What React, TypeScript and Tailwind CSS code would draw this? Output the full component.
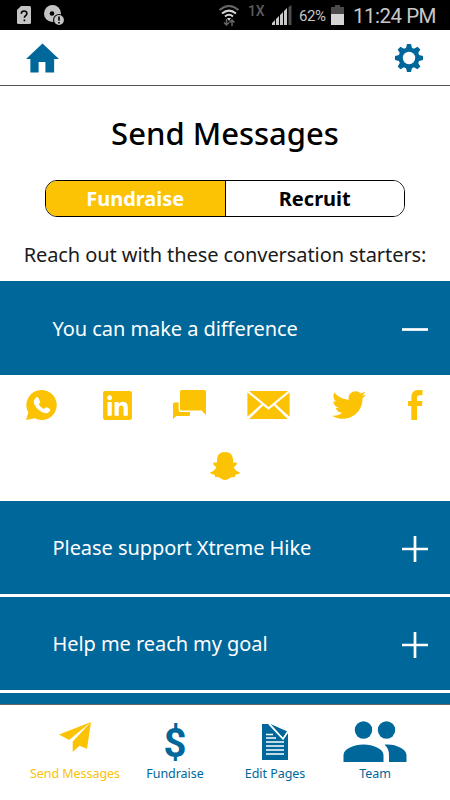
import type { ReactNode } from 'react'
import { FaLinkedin, FaTwitter } from 'react-icons/fa'

function StatusBar() {
  return (
    <div className="flex h-[30px] shrink-0 items-center bg-black pl-[17px] font-[Roboto,sans-serif]">
      <svg width="14" height="18" viewBox="0 0 14 18" className="shrink-0">
        <path d="M4 0h8.500q1.500 0 1.500 1.500v15q0 1.500-1.500 1.500h-11Q0 18 0 16.500V4z" fill="#c4c4c4" />
        <path d="M4.300 7.700c0-3.600 5.600-3.600 5.600-.2 0 2.200-2.500 2.100-2.500 4.200M7.400 13.500v1.700" fill="none" stroke="#000" strokeWidth="1.600" />
      </svg>
      <svg width="21" height="21" viewBox="0 0 21 21" className="ml-[13px] mt-px shrink-0">
        <circle cx="8.500" cy="8.500" r="8.500" fill="#c4c4c4" />
        <circle cx="8" cy="8.500" r="2.300" />
        <circle cx="15" cy="15" r="6" />
        <circle cx="15" cy="15" r="4.900" fill="#c4c4c4" />
        <path d="M15 11.500v4.300M15 16.900v1.500" stroke="#000" strokeWidth="1.600" />
      </svg>
      <svg width="22" height="23" viewBox="0 0 22 23" className="ml-[153px] shrink-0" fill="none">
        <path d="M1.500 6Q11-2 20.500 6" stroke="#686868" strokeWidth="2" />
        <path d="M4 9.500q7-5.800 14 0M7 12.500q4-3.500 8 0" stroke="#d4d4d4" strokeWidth="2" />
        <path d="M9 14h4l-2 3z" fill="#d4d4d4" />
        <path d="M8.500 15v6M6 18.500L8.500 21l2.500-2.500M14 22v-6M11.500 18.500L14 16l2.500 2.500" stroke="#666" strokeWidth="1.500" />
      </svg>
      <span className="-mt-2 ml-2 w-[17px] text-[14px] font-medium leading-none tracking-[-0.3px] text-[#5c5c5c]">1X</span>
      <svg width="20" height="20" viewBox="0 0 20 20" className="ml-[7px] shrink-0">
        <path d="M0 20v-2l3-3v5zM4 20v-6l3-3v9zM8 20V10l3-3v13zM12 20V6l3-3v17z" fill="#cacaca" />
        <path d="M16.500 20V2L19.500 0v20z" fill="#4e4e4e" />
      </svg>
      <span className="ml-[7px] mt-[2px] w-[28px] text-[15px] leading-none tracking-[-0.4px] text-[#c4c4c4]">62%</span>
      <svg width="13" height="20" viewBox="0 0 13 20" className="ml-1 shrink-0">
        <path d="M4 0h5v2h4v7H0V2h4z" fill="#4b4b4b" />
        <path d="M0 9h13v11H0z" fill="#d4d4d4" />
      </svg>
      <span className="ml-[9px] mt-[2px] whitespace-nowrap text-[20.500px] leading-none tracking-[-0.500px] text-[#c8c8c8]">11:24 PM</span>
    </div>
  )
}

function GearIcon() {
  return (
    <svg width="28" height="28" viewBox="-14 -14 28 28" fill="#00679b">
      {[0, 45, 90, 135].map((angle) => (
        <path key={angle} d="M-2-14h4l1.500 6v16L2 14h-4l-1.500-6V-8z" transform={`rotate(${angle})`} />
      ))}
      <circle r="10.500" />
      <circle r="6.200" fill="white" />
    </svg>
  )
}

function WhatsAppIcon() {
  return (
    <svg width="31" height="30" viewBox="0 0 31 30">
      <path d="M15.500 0a15 15 0 1 1-6.700 28.300L0 30l2.400-7.500A15 15 0 0 1 15.500 0" fill="#fcc204" />
      <path d="M9.100 8.400q2-2.400 3.400-.5l1.700 3.700q.3 1-1.500 2.700 1.700 3.200 5.200 4.800 1.700-2.300 2.700-1.900l3.400 1.800q.7.500-.3 2.300-2 2.500-5.100 1.600-7.700-2.300-10.500-9.200-.9-3.400 1-5.300" fill="white" />
    </svg>
  )
}

function ChatIcon() {
  return (
    <svg width="33" height="30" viewBox="0 0 33 30" fill="#fcc204">
      <path d="M8.500 0h23q1.500 0 1.500 1.500v23.500l-4.500-4.500h-20q-1.500 0-1.500-1.500V1.500Q7 0 8.500 0" />
      <path d="M0 29V14q0-1.500 1.500-1.500h4.100V20q0 2 2 2H17v2.500q0 1.500-1.500 1.500h-12z" />
    </svg>
  )
}

function MailIcon() {
  return (
    <svg width="43" height="28" viewBox="0 0 43 28" fill="#fcc204">
      <path d="M2 0h39L21.500 16zM.4 1.400 14.500 13 .4 25.800zM42.600 1.400 28.500 13l14.100 12.800zM2.300 28l13.800-13.500 5.400 4.300 5.400-4.300L40.700 28z" />
    </svg>
  )
}

function FacebookIcon() {
  return (
    <svg width="15" height="30" viewBox="0 0 15 30">
      <path d="M3.300 30V16H0v-5h3.300V7.500Q3.300 0 10 0h4.500v5.300h-3q-2.500 0-2.500 2.500V11h5.500l-.6 5H9v14z" fill="#fcc204" />
    </svg>
  )
}

function SnapchatIcon() {
  return (
    <svg width="30" height="28" viewBox="0 0 30 28">
      <path
        d="M15 0Q22.800.2 23 7.500V10.500h3.500q1 1-.3 2.600L23.500 15.500q2.300 3.800 6.500 5-.2 1.500-4.500 2.300l-.8 2.400q-3.500-.4-5.200 1-2 1.800-4.500 1.800t-4.500-1.800q-1.700-1.400-5.200-1l-.8-2.400Q.2 22 0 20.500q4.200-1.200 6.500-5L3.800 13.100q-1.300-1.600-.3-2.600H7V7.500Q7.200.2 15 0"
        fill="#fcc204"
      />
    </svg>
  )
}

function AccordionRow({ title, open = false }: { title: string; open?: boolean }) {
  return (
    <button className="flex h-full w-full items-center justify-between bg-[#00679b] pl-[52.500px] pr-[22px] text-left text-white">
      <span className="mt-px whitespace-nowrap text-[20px] leading-7 tracking-[-0.06px]">{title}</span>
      <svg width="26" height="26" viewBox="0 0 26 26" className="mt-[3px]">
        <path d={open ? 'M0 12.500h26' : 'M0 13h26M13 0v26'} stroke="white" strokeWidth="2.700" />
      </svg>
    </button>
  )
}

function NavItem({ label, active = false, children }: { label: string; active?: boolean; children: ReactNode }) {
  return (
    <div className={`flex w-[100px] flex-col items-center ${active ? 'text-[#fcc204]' : 'text-[#00679b]'}`}>
      <div className="flex h-[43px] items-center justify-center">{children}</div>
      <span className="mt-[2px] whitespace-nowrap text-[12.500px] leading-[17px] tracking-[-0.05px]">{label}</span>
    </div>
  )
}

function BottomNav() {
  return (
    <nav className="flex h-[96px] shrink-0 border-t border-[#666] bg-white px-[25px] pt-[15px]">
      <NavItem label="Send Messages" active>
        <svg width="32" height="30" viewBox="0 0 32 30" fill="currentColor" className="-mt-[9px]">
          <path d="M32 0 0 12.500l10 5.500zM32 0 13.700 19.500V30l6.800-6.300 7.500 3z" />
        </svg>
      </NavItem>
      <NavItem label="Fundraise">
        <span className="mt-[3px] font-[Roboto,sans-serif] text-[40px] font-bold leading-[43px]">$</span>
      </NavItem>
      <NavItem label="Edit Pages">
        <svg width="26" height="36" viewBox="0 0 26 36">
          <path d="M0 0h7l14 15 5-6.500V36H0z" fill="currentColor" />
          <path d="M8.500 0 25.500 7.500 21 14z" fill="currentColor" />
          <path d="M7 0 21 15l5-7.500M4 10.500h7M4 14h10M4 18h18M4 22h18M4 26h18M4 30h18" stroke="white" strokeWidth="1.700" fill="none" />
        </svg>
      </NavItem>
      <NavItem label="Team">
        <svg width="64" height="41" viewBox="0 0 64 41" fill="currentColor">
          <circle cx="20.500" cy="9" r="8.700" />
          <circle cx="43.500" cy="9" r="8.700" />
          <path d="M.5 41v-7C.5 28 11 23.500 20.500 23.500S40.500 28 40.500 34v7zM41.500 23.700C52 22.500 63.500 28 63.500 34v7H46v-7q0-6.700-4.500-10.300" />
        </svg>
      </NavItem>
    </nav>
  )
}

export default function App() {
  return (
    <div className="flex h-[800px] w-[450px] flex-col overflow-hidden bg-white font-['Noto_Sans',sans-serif] text-black">
      <StatusBar />
      <header className="flex h-[56px] shrink-0 items-center justify-between border-b border-[#555] pl-[26px] pr-[27px]">
        <svg width="33" height="30" viewBox="0 0 34 30" className="mt-px">
          <path d="M17 0 34 16h-5v14h-9V19h-7v11H4.500V16H0z" fill="#00679b" />
        </svg>
        <GearIcon />
      </header>

      <main className="flex min-h-0 flex-1 flex-col overflow-hidden">
        <h1 className="mt-[25px] shrink-0 text-center text-[31px] font-medium leading-[44px]">Send Messages</h1>
        <div className="mx-[45px] mt-[25px] flex h-[37px] shrink-0 overflow-hidden rounded-[12px] border border-black text-[20px] font-bold">
          <button className="flex-1 border-r border-black bg-[#fcc204] text-white">Fundraise</button>
          <button className="flex-1 bg-white">Recruit</button>
        </div>
        <p className="mt-[24px] shrink-0 whitespace-nowrap text-center text-[20px] leading-[28px] tracking-[-0.08px] text-[#1a1a1a]">
          Reach out with these conversation starters:
        </p>

        <div className="mt-[12px] flex shrink-0 flex-col">
          <div className="h-[94px]">
            <AccordionRow title="You can make a difference" open />
          </div>
          <div className="h-[126px] pt-[15px] text-[#fcc204]">
            <div className="flex h-[30px] items-center pl-[26px]">
              <WhatsAppIcon />
              <FaLinkedin className="ml-[46px] h-[33px] w-[29px]" />
              <div className="ml-[41px]">
                <ChatIcon />
              </div>
              <div className="ml-[41px]">
                <MailIcon />
              </div>
              <FaTwitter size={34} className="ml-[42px]" />
              <div className="ml-[42px]">
                <FacebookIcon />
              </div>
            </div>
            <div className="mt-[32px] flex justify-center">
              <SnapchatIcon />
            </div>
          </div>
          <div className="grid auto-rows-[93px] gap-[3px]">
            <AccordionRow title="Please support Xtreme Hike" />
            <AccordionRow title="Help me reach my goal" />
            <div className="bg-[#00679b]" />
          </div>
        </div>
      </main>
      <BottomNav />
    </div>
  )
}
